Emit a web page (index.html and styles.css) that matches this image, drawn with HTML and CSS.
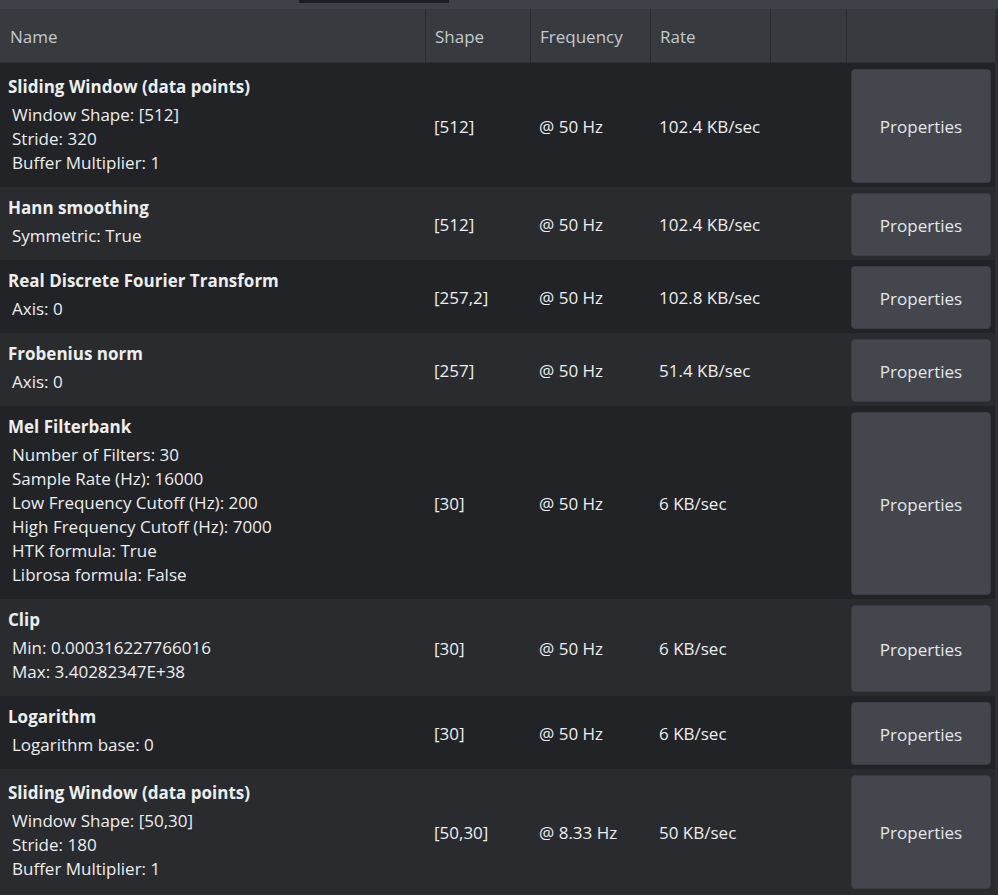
FILE: index.html
```
<!DOCTYPE html>
<html lang="en">
<head>
  <meta charset="UTF-8">
  <title>Pipeline</title>
  <link rel="stylesheet" href="styles.css">
</head>
<body>
  <div class="topbar"><span class="tab-mark"></span></div>

  <div class="pipeline">
    <div class="head row-grid">
      <div class="hcell">Name</div>
      <div class="hcell">Shape</div>
      <div class="hcell">Frequency</div>
      <div class="hcell">Rate</div>
      <div class="hcell"></div>
      <div class="hcell"></div>
    </div>

    <div class="row row-grid">
      <div class="name-cell tall">
        <div class="title">Sliding Window (data points)</div>
        <div class="param">Window Shape: [512]</div>
        <div class="param">Stride: 320</div>
        <div class="param">Buffer Multiplier: 1</div>
      </div>
      <div class="cell">[512]</div>
      <div class="cell">@ 50 Hz</div>
      <div class="cell">102.4 KB/sec</div>
      <div class="cell"></div>
      <div class="btn-cell"><button>Properties</button></div>
    </div>

    <div class="row row-grid alt">
      <div class="name-cell">
        <div class="title">Hann smoothing</div>
        <div class="param">Symmetric: True</div>
      </div>
      <div class="cell">[512]</div>
      <div class="cell">@ 50 Hz</div>
      <div class="cell">102.4 KB/sec</div>
      <div class="cell"></div>
      <div class="btn-cell"><button>Properties</button></div>
    </div>

    <div class="row row-grid">
      <div class="name-cell">
        <div class="title">Real Discrete Fourier Transform</div>
        <div class="param">Axis: 0</div>
      </div>
      <div class="cell">[257,2]</div>
      <div class="cell">@ 50 Hz</div>
      <div class="cell">102.8 KB/sec</div>
      <div class="cell"></div>
      <div class="btn-cell"><button>Properties</button></div>
    </div>

    <div class="row row-grid alt">
      <div class="name-cell">
        <div class="title">Frobenius norm</div>
        <div class="param">Axis: 0</div>
      </div>
      <div class="cell">[257]</div>
      <div class="cell">@ 50 Hz</div>
      <div class="cell">51.4 KB/sec</div>
      <div class="cell"></div>
      <div class="btn-cell"><button>Properties</button></div>
    </div>

    <div class="row row-grid">
      <div class="name-cell">
        <div class="title">Mel Filterbank</div>
        <div class="param">Number of Filters: 30</div>
        <div class="param">Sample Rate (Hz): 16000</div>
        <div class="param">Low Frequency Cutoff (Hz): 200</div>
        <div class="param">High Frequency Cutoff (Hz): 7000</div>
        <div class="param">HTK formula: True</div>
        <div class="param">Librosa formula: False</div>
      </div>
      <div class="cell">[30]</div>
      <div class="cell">@ 50 Hz</div>
      <div class="cell">6 KB/sec</div>
      <div class="cell"></div>
      <div class="btn-cell"><button>Properties</button></div>
    </div>

    <div class="row row-grid alt">
      <div class="name-cell">
        <div class="title">Clip</div>
        <div class="param">Min: 0.000316227766016</div>
        <div class="param">Max: 3.40282347E+38</div>
      </div>
      <div class="cell">[30]</div>
      <div class="cell">@ 50 Hz</div>
      <div class="cell">6 KB/sec</div>
      <div class="cell"></div>
      <div class="btn-cell"><button>Properties</button></div>
    </div>

    <div class="row row-grid">
      <div class="name-cell">
        <div class="title">Logarithm</div>
        <div class="param">Logarithm base: 0</div>
      </div>
      <div class="cell">[30]</div>
      <div class="cell">@ 50 Hz</div>
      <div class="cell">6 KB/sec</div>
      <div class="cell"></div>
      <div class="btn-cell"><button>Properties</button></div>
    </div>

    <div class="row row-grid alt">
      <div class="name-cell tall">
        <div class="title">Sliding Window (data points)</div>
        <div class="param">Window Shape: [50,30]</div>
        <div class="param">Stride: 180</div>
        <div class="param">Buffer Multiplier: 1</div>
      </div>
      <div class="cell">[50,30]</div>
      <div class="cell">@ 8.33 Hz</div>
      <div class="cell">50 KB/sec</div>
      <div class="cell"></div>
      <div class="btn-cell"><button>Properties</button></div>
    </div>
  </div>
</body>
</html>
```

FILE: styles.css
```
body {
  margin: 0;
  background-color: #2b2c30;
  font-family: 'Open Sans', 'Noto Sans', sans-serif;
  font-size: 17px;
  color: #eceef0;
  overflow: hidden;
}

.topbar {
  height: 9px;
  background-color: #3e4147;
  position: relative;
}

.tab-mark {
  position: absolute;
  left: 299px;
  top: 0;
  width: 150px;
  height: 3px;
  background-color: #1d1e21;
}

.pipeline {
  width: 995px;
  border-right: 3px solid #2e2f33;
}

.row-grid {
  display: grid;
  grid-template-columns: 425px 105px 120px 120px 76px 149px;
}

.head {
  height: 53px;
  background-color: #373a3f;
  border-bottom: 1px solid #2b2d31;
  color: #c3cad1;
}

.hcell {
  display: flex;
  align-items: center;
  padding: 2px 0 0 9px;
  border-left: 1px solid #2a2b2f;
}

.hcell:first-child {
  border-left: none;
  padding-left: 10px;
}

.row {
  background-color: #222326;
}

.row.alt {
  background-color: #2a2b2f;
}

.name-cell {
  padding: 9px 0 12px 8px;
}

.name-cell.tall {
  padding-top: 12px;
}

.title {
  font-weight: 700;
  line-height: 24px;
  margin-bottom: 4px;
}

.param {
  line-height: 24px;
  padding-left: 4px;
}

.cell {
  display: flex;
  align-items: center;
  padding: 2px 0 0 9px;
}

.btn-cell {
  display: flex;
  padding: 6px 4px 4px 5px;
}

button {
  flex-grow: 1;
  background-color: #43464c;
  border: 1px solid #393c41;
  border-radius: 4px;
  color: #e3e7eb;
  font-family: inherit;
  font-size: 17px;
  padding-top: 2px;
  cursor: pointer;
}

button:hover {
  background-color: #4b4e55;
}
```
